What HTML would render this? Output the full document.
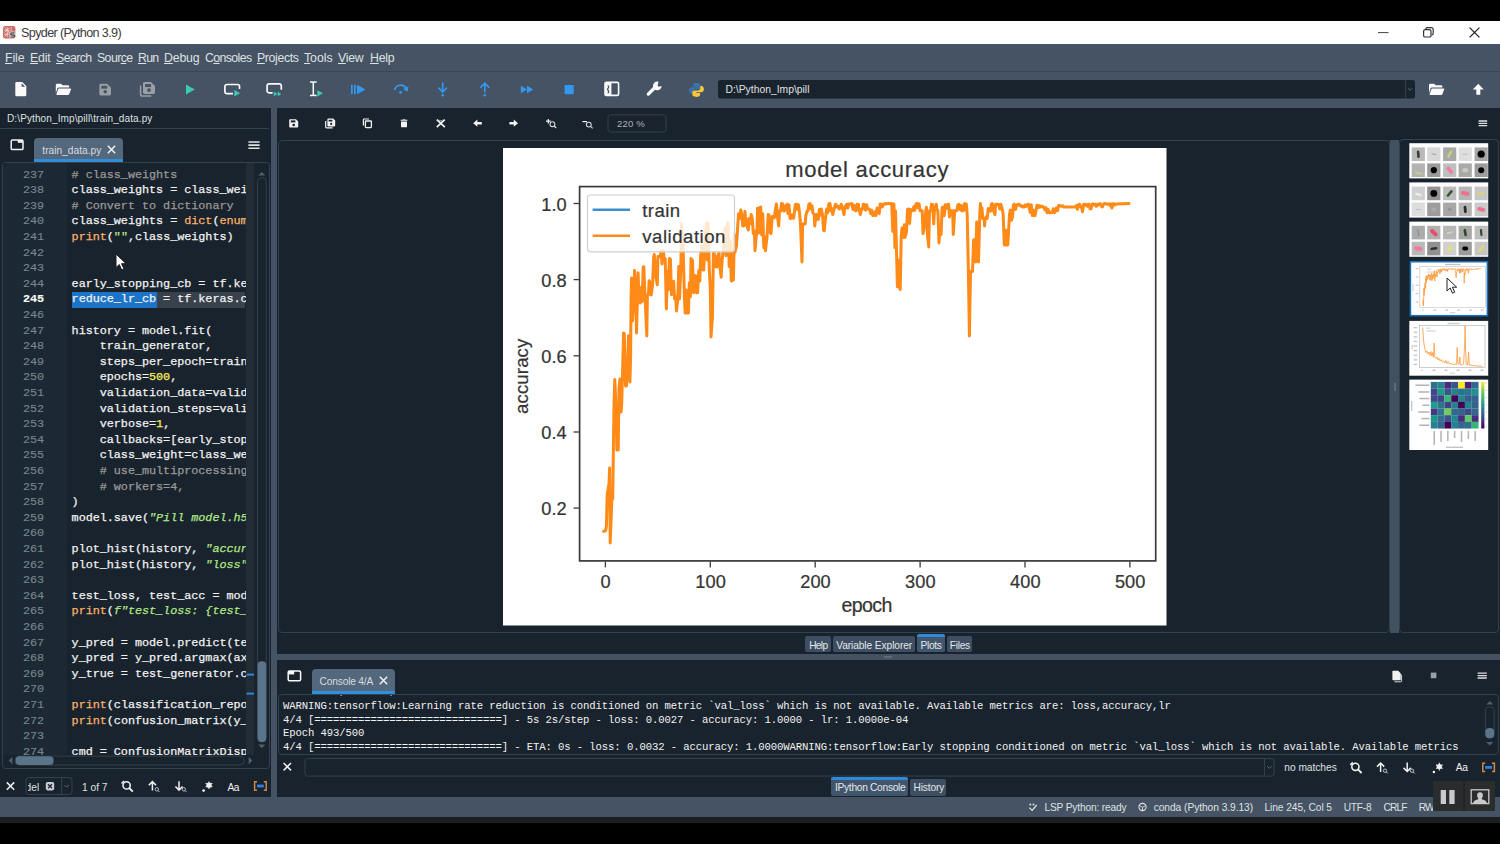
<!DOCTYPE html>
<html><head><meta charset="utf-8"><title>Spyder (Python 3.9)</title>
<style>
*{box-sizing:border-box;margin:0;padding:0}
html,body{width:1500px;height:844px;overflow:hidden;background:#000}
body{position:relative;font-family:"Liberation Sans",sans-serif;color:#e0e1e3;font-size:10px}
.abs{position:absolute}
.sans{font-family:"Liberation Sans",sans-serif}
.mono{font-family:"Liberation Mono",monospace}
#titlebar{left:0;top:21px;width:1500px;height:23px;background:#fff}
#menubar{left:0;top:44px;width:1500px;height:27px;background:#455364}
#toolbar{left:0;top:71px;width:1500px;height:37px;background:#455364;border-top:1px solid #3e4b5a}
#main{left:0;top:108px;width:1500px;height:689px;background:#19232d}
#statusbar{left:0;top:797px;width:1500px;height:20px;background:#455364}
#taskbar{left:0;top:817px;width:1500px;height:6px;background:#1c1d1f}
.menu span{position:absolute;top:7px;font-size:12.3px;color:#e0e1e3;white-space:nowrap;letter-spacing:-0.1px}
.menu u{text-decoration-thickness:1px;text-underline-offset:1.5px}
svg{position:absolute;overflow:visible}
.tab{background:#37414f;border-radius:3px 3px 0 0;border-bottom:2px solid #1a72bb}
.btab{position:absolute;height:16px;background:#32414b;color:#dfe1e2;font-size:10.2px;line-height:16px;text-align:center;border-radius:2px;white-space:nowrap}
.btab.sel{background:#37506b;border-top:2px solid #1a72bb;line-height:13px}
.ln,.cd{position:absolute;white-space:pre;font-family:"Liberation Mono",monospace;font-size:11.800px;letter-spacing:-0.040px;line-height:15.600px}
.ln{color:#74868f;-webkit-text-stroke:0.150px currentColor}.cd{color:#f2f2f2;-webkit-text-stroke:0.25px currentColor}
.c{color:#999}.s2{color:#b0e686}.k{color:#fab16c}.n{color:#faed5c}.s{color:#b0e686;font-style:italic}
.st{position:absolute;top:4px;font-size:10.2px;color:#dfe1e2;white-space:nowrap}
</style></head><body>
<!-- g_top -->
<div class="abs" style="left:0;top:21px;width:1500px;height:23px;background:#fff"></div>
<svg style="left:3.200px;top:25.600px" width="12.400" height="12.400" viewBox="0 0 12.400 12.400"><rect width="12.400" height="12.400" rx="2.200" fill="#cc6a65"/><path d="M1 4.200h6M1 8.200h5M4.200 1v10M8.200 1v4M1.500 1.500l5 5M1.500 10.500l4-4M6.500 1.500l-5 5" stroke="#f4d9d6" stroke-width="0.800" fill="none"/><rect x="6.400" y="5.600" width="6" height="6.800" rx="1" fill="#e9d6d4"/><path d="M11.600 6.800H8.700a1 1 0 0 0-1 1v.2a1 1 0 0 0 1 1h1.900a1 1 0 0 1 1 1v.2a1 1 0 0 1-1 1H7.400" stroke="#4d4d4d" stroke-width="1.300" fill="none"/></svg>
<span style="position:absolute;left:21.0px;top:26.1px;font-family:'Liberation Sans',sans-serif;font-size:12.60px;line-height:15.0px;color:#3a3a3a;white-space:pre;letter-spacing:-0.635px;">Spyder (Python 3.9)</span>
<svg style="left:1378px;top:31.5px" width="11" height="2"><rect width="10.5" height="1.1" fill="#555"/></svg>
<svg style="left:1423px;top:27px" width="11" height="11" viewBox="0 0 11 11"><rect x="0.6" y="2.6" width="7.4" height="7.4" rx="1.6" fill="none" stroke="#333" stroke-width="1.2"/><path d="M2.8 2.4V2a1.4 1.4 0 0 1 1.4-1.4h4.2A1.8 1.8 0 0 1 10.2 2.4v4.2A1.4 1.4 0 0 1 8.8 8h-.4" fill="none" stroke="#333" stroke-width="1.2"/></svg>
<svg style="left:1469px;top:27px" width="11" height="11" viewBox="0 0 11 11"><path d="M0.6 0.6l9.8 9.8M10.4 0.6l-9.8 9.8" stroke="#222" stroke-width="1.3"/></svg>
<div class="abs" style="left:0;top:44px;width:1500px;height:27px;background:#455364"></div>
<span style="position:absolute;left:5.0px;top:50.8px;font-family:'Liberation Sans',sans-serif;font-size:12.30px;line-height:15.0px;color:#dfe1e2;white-space:pre;letter-spacing:-0.080px;"><u>F</u>ile</span>
<span style="position:absolute;left:30.0px;top:50.8px;font-family:'Liberation Sans',sans-serif;font-size:12.30px;line-height:15.0px;color:#dfe1e2;white-space:pre;letter-spacing:-0.174px;"><u>E</u>dit</span>
<span style="position:absolute;left:56.0px;top:50.8px;font-family:'Liberation Sans',sans-serif;font-size:12.30px;line-height:15.0px;color:#dfe1e2;white-space:pre;letter-spacing:-0.579px;"><u>S</u>earch</span>
<span style="position:absolute;left:97.0px;top:50.8px;font-family:'Liberation Sans',sans-serif;font-size:12.30px;line-height:15.0px;color:#dfe1e2;white-space:pre;letter-spacing:-0.579px;">Sour<u>c</u>e</span>
<span style="position:absolute;left:138.0px;top:50.8px;font-family:'Liberation Sans',sans-serif;font-size:12.30px;line-height:15.0px;color:#dfe1e2;white-space:pre;letter-spacing:-0.688px;"><u>R</u>un</span>
<span style="position:absolute;left:164.0px;top:50.8px;font-family:'Liberation Sans',sans-serif;font-size:12.30px;line-height:15.0px;color:#dfe1e2;white-space:pre;letter-spacing:-0.149px;"><u>D</u>ebug</span>
<span style="position:absolute;left:205.0px;top:50.8px;font-family:'Liberation Sans',sans-serif;font-size:12.30px;line-height:15.0px;color:#dfe1e2;white-space:pre;letter-spacing:-0.597px;">C<u>o</u>nsoles</span>
<span style="position:absolute;left:257.0px;top:50.8px;font-family:'Liberation Sans',sans-serif;font-size:12.30px;line-height:15.0px;color:#dfe1e2;white-space:pre;letter-spacing:-0.366px;"><u>P</u>rojects</span>
<span style="position:absolute;left:304.0px;top:50.8px;font-family:'Liberation Sans',sans-serif;font-size:12.30px;line-height:15.0px;color:#dfe1e2;white-space:pre;letter-spacing:-0.043px;"><u>T</u>ools</span>
<span style="position:absolute;left:338.0px;top:50.8px;font-family:'Liberation Sans',sans-serif;font-size:12.30px;line-height:15.0px;color:#dfe1e2;white-space:pre;letter-spacing:-0.234px;"><u>V</u>iew</span>
<span style="position:absolute;left:370.0px;top:50.8px;font-family:'Liberation Sans',sans-serif;font-size:12.30px;line-height:15.0px;color:#dfe1e2;white-space:pre;letter-spacing:-0.199px;"><u>H</u>elp</span>
<div class="abs" style="left:0;top:71px;width:1500px;height:37px;background:#455364;border-top:1.500px solid #36475a"></div>
<!-- g_icons -->
<svg style="left:0;top:71px" width="1500" height="37" viewBox="0 71 1500 37">
<path d="M16.6 82h5.6l4.1 4.1v8.9a1.3 1.3 0 0 1-1.3 1.3h-8.4a1.3 1.3 0 0 1-1.3-1.3v-11.7a1.3 1.3 0 0 1 1.3-1.3z" fill="#fafafa"/><path d="M21.6 83.2v3.6h3.6z" fill="#455364"/>
<path d="M55.8 85.1a1.3 1.3 0 0 1 1.3-1.3h3.9l1.5 1.5h5.4a1.3 1.3 0 0 1 1.3 1.3v0.9h-10.6a1.3 1.3 0 0 0-1.2 0.8l-1.6 4.6z" fill="#fafafa"/><path d="M58.9 88.4h11.6a0.6 0.6 0 0 1 .55 .8l-1.9 5.1a1.1 1.1 0 0 1-1 .7h-11.2a0.6 0.6 0 0 1-.55-.8l1.7-5a1.1 1.1 0 0 1 1-.8z" fill="#fafafa"/>
<path d="M100.79 83.80 h6.26 l3.94 3.94 v6.26 a1.39 1.39 0 0 1 -1.39 1.39 h-8.82 a1.39 1.39 0 0 1 -1.39 -1.39 v-8.82 a1.39 1.39 0 0 1 1.39 -1.39 z" fill="#9a9fa5"/><rect x="101.37" y="85.77" width="5.80" height="2.90" fill="#455364"/><circle cx="105.20" cy="91.69" r="1.74" fill="#455364"/>
<path d="M144.44 82.00 h6.48 l4.08 4.08 v6.48 a1.44 1.44 0 0 1 -1.44 1.44 h-9.12 a1.44 1.44 0 0 1 -1.44 -1.44 v-9.12 a1.44 1.44 0 0 1 1.44 -1.44 z" fill="#9a9fa5"/><rect x="145.04" y="84.04" width="6.00" height="3.00" fill="#455364"/><circle cx="149.00" cy="90.16" r="1.80" fill="#455364"/>
<path d="M140.6 85.5v9a1.6 1.6 0 0 0 1.6 1.6h9" fill="none" stroke="#9a9fa5" stroke-width="1.5"/>
<path d="M186 84.6l8.8 4.9l-8.8 4.9z" fill="#3ccab2"/>
<path d="M233 93.6h-6.2a1.9 1.9 0 0 1-1.9-1.9v-5.3a1.9 1.9 0 0 1 1.9-1.9h10.8a1.9 1.9 0 0 1 1.9 1.9v2.6" fill="none" stroke="#fafafa" stroke-width="1.7"/>
<path d="M234.3 90l5.9 3.3l-5.9 3.3z" fill="#3ccab2"/>
<path d="M272.6 92.8h-3.6a1.9 1.9 0 0 1-1.9-1.9v-5.1a1.9 1.9 0 0 1 1.9-1.9h10.4a1.9 1.9 0 0 1 1.9 1.9v4" fill="none" stroke="#fafafa" stroke-width="1.7"/>
<path d="M273.8 91.6l3.6 2.3l-3.6 2.3zM277.7 91.6l3.6 2.3l-3.6 2.3z" fill="#3ccab2"/>
<path d="M310 82h2.4l.9.5l.9-.5h2.4M310 95.4h2.4l.9-.5l.9.5h2.4M313.3 82.5v12.4" fill="none" stroke="#fafafa" stroke-width="1.5"/>
<path d="M317.4 90.2l5.6 3.1l-5.6 3.1z" fill="#3ccab2"/>
<rect x="351" y="84.8" width="1.7" height="9.4" fill="#3399f0"/><rect x="354" y="84.8" width="1.7" height="9.4" fill="#3399f0"/><path d="M357 84.8l8.4 4.7l-8.4 4.7z" fill="#3399f0"/>
<path d="M394.6 90a6.3 6.3 0 0 1 11.6-1.6" fill="none" stroke="#3399f0" stroke-width="1.7"/><path d="M408.4 86.2l-.6 5.2l-4.8-2.2z" fill="#3399f0"/><circle cx="400.6" cy="92.3" r="1.4" fill="#3399f0"/>
<path d="M442.7 82.4v9.6M438.5 87.6l4.2 4.4l4.2-4.4" fill="none" stroke="#3399f0" stroke-width="1.6"/><circle cx="442.7" cy="95.3" r="1.3" fill="#3399f0"/>
<path d="M484.8 92.6v-9M480.4 87.6l4.4-4.4l4.4 4.4" fill="none" stroke="#3399f0" stroke-width="1.6"/><circle cx="484.8" cy="95.3" r="1.3" fill="#3399f0"/>
<path d="M520.8 85.8l6.3 3.75l-6.3 3.75zM527 85.8l6.3 3.75l-6.3 3.75z" fill="#3399f0"/>
<rect x="564.6" y="85" width="9.1" height="9.2" fill="#3399f0"/>
<rect x="605" y="82.4" width="13.6" height="13" rx="1.4" fill="none" stroke="#fafafa" stroke-width="1.6"/>
<rect x="605.2" y="82.6" width="6.2" height="12.6" fill="#fafafa"/>
<path d="M607 85.4h2.2v2.2l-1 1.7l1 1.7v2.2h-2.2a1.5 1.5 0 0 0 .9-1.5a1.5 1.5 0 0 0-.9-1.6v-1.6a1.5 1.5 0 0 0 .9-1.6a1.5 1.5 0 0 0-.9-1.5z" fill="#455364"/>
<path d="M648.300 94.100l7.600-7.600" stroke="#fafafa" stroke-width="3.300" stroke-linecap="round"/>
<circle cx="657.300" cy="85.900" r="4.300" fill="#fafafa"/>
<path d="M657.600 85.600l1.200-5.200l5 0l0 5l-5 1.400z" fill="#455364"/>
<path d="M696.2 82.7c-3 0-3.4 1.3-3.4 2.3v1.7h3.6v.6h-5c-1.5 0-2.4 1.3-2.4 3.2s.9 3.2 2.3 3.2h1.3v-2c0-1.5 1.2-2.5 2.5-2.5h3.5c1.2 0 2-.9 2-2.1v-2.1c0-1.300-1.400-2.300-4.400-2.300z" fill="#3775a9"/>
<path d="M696.700 96.900c3 0 3.400-1.300 3.400-2.300v-1.700h-3.600v-.6h5c1.500 0 2.400-1.300 2.400-3.200s-.9-3.200-2.300-3.200h-1.300v2c0 1.500-1.200 2.500-2.500 2.500h-3.500c-1.200 0-2 .9-2 2.100v2.100c0 1.300 1.400 2.300 4.400 2.300z" fill="#f8c63d"/>
<rect x="718" y="80" width="697" height="18.400" rx="2.500" fill="#19232d"/>
<path d="M1405.500 80.500v17.400" stroke="#32414b" stroke-width="1"/>
<path d="M1408 88.300l2 2l2-2" fill="none" stroke="#5f6b78" stroke-width="1"/>
<g transform="translate(1373.200 0)"><path d="M55.800 85.100a1.300 1.300 0 0 1 1.300-1.300h3.900l1.500 1.500h5.400a1.300 1.300 0 0 1 1.300 1.300v0.900h-10.600a1.300 1.300 0 0 0-1.200 0.800l-1.600 4.600z" fill="#fafafa"/><path d="M58.900 88.400h11.600a0.600 0.600 0 0 1 .55 .8l-1.900 5.100a1.100 1.100 0 0 1-1 .7h-11.200a0.600 0.600 0 0 1-.55-.8l1.700-5a1.100 1.100 0 0 1 1-.8z" fill="#fafafa"/></g>
<path d="M1478.300 83.800l5.500 5.700h-3.500v5.200h-4v-5.200h-3.500z" fill="#fafafa"/>
</svg>
<span style="position:absolute;left:725.5px;top:82.5px;font-family:'Liberation Sans',sans-serif;font-size:10.30px;line-height:13.0px;color:#e0e1e3;white-space:pre;letter-spacing:0.023px;">D:\Python_Imp\pill</span>
<!-- g_editor -->
<div class="abs" style="left:0;top:108px;width:1500px;height:689px;background:#19232d"></div>
<div class="abs" style="left:271px;top:108px;width:6px;height:689px;background:#455364"></div>
<span style="position:absolute;left:7.0px;top:112.0px;font-family:'Liberation Sans',sans-serif;font-size:10.00px;line-height:13.0px;color:#dfe1e2;white-space:pre;letter-spacing:0.117px;">D:\Python_Imp\pill\train_data.py</span>
<div class="abs" style="left:0;top:127.5px;width:269px;height:1px;background:#32414b"></div>
<svg style="left:0;top:108px" width="271" height="60" viewBox="0 108 271 60">
<rect x="11.200" y="140" width="11.800" height="9.600" rx="1.200" fill="none" stroke="#f2f2f2" stroke-width="1.500"/><rect x="17.800" y="140" width="5.200" height="2.800" fill="#f2f2f2"/>
<path d="M248.4 142h11.2M248.4 145.1h11.2M248.4 148.2h11.2" stroke="#e0e1e3" stroke-width="1.6"/>
</svg>
<div class="abs" style="left:34.400px;top:138.400px;width:88.400px;height:24px;background:#53687c;border-radius:4px 4px 0 0;border-bottom:3.400px solid #2f8fdc"></div>
<span style="position:absolute;left:42.3px;top:144.0px;font-family:'Liberation Sans',sans-serif;font-size:10.20px;line-height:13.0px;color:#d6dbe0;white-space:pre;letter-spacing:0.002px;">train_data.py</span>
<svg style="left:106.5px;top:144.6px" width="9" height="9" viewBox="0 0 9 9"><path d="M0.8 0.8l7.4 7.4M8.2 0.8l-7.4 7.4" stroke="#f0f0f0" stroke-width="1.5"/></svg>
<div class="abs" style="left:2px;top:162.3px;width:267.5px;height:606.5px;border:1px solid #32414b;border-radius:4px"></div>
<div class="abs" style="left:3px;top:163.3px;width:64.3px;height:592px;background:#1c2833;border-radius:3px 0 0 0"></div>
<div class="abs" style="left:71.600px;top:292.2px;width:173.900px;height:15.6px;background:#39424c"></div>
<div class="abs" style="left:71.6px;top:292.2px;width:85.7px;height:15.6px;background:#1d74c6"></div>
<div class="abs" style="left:245.6px;top:163.3px;width:8.6px;height:592px;background:#212c37"></div>
<div class="abs" style="left:0;top:163.3px;width:245.6px;height:591.5px;overflow:hidden">
<span class="ln" style="left:23.0px;top:4.30px;">237</span>
<span class="cd" style="left:71.6px;top:4.30px;letter-spacing:-0.040px"><span class="c"># class_weights</span></span>
<span class="ln" style="left:23.0px;top:19.90px;">238</span>
<span class="cd" style="left:71.6px;top:19.90px;letter-spacing:-0.040px">class_weights = class_weig</span>
<span class="ln" style="left:23.0px;top:35.50px;">239</span>
<span class="cd" style="left:71.6px;top:35.50px;letter-spacing:-0.040px"><span class="c"># Convert to dictionary</span></span>
<span class="ln" style="left:23.0px;top:51.10px;">240</span>
<span class="cd" style="left:71.6px;top:51.10px;letter-spacing:-0.040px">class_weights = <span class="k">dict</span>(<span class="k">enume</span></span>
<span class="ln" style="left:23.0px;top:66.70px;">241</span>
<span class="cd" style="left:71.6px;top:66.70px;letter-spacing:-0.040px"><span class="k">print</span>(<span class="s2">&quot;&quot;</span>,class_weights)</span>
<span class="ln" style="left:23.0px;top:82.30px;">242</span>
<span class="ln" style="left:23.0px;top:97.90px;">243</span>
<span class="ln" style="left:23.0px;top:113.50px;">244</span>
<span class="cd" style="left:71.6px;top:113.50px;letter-spacing:-0.040px">early_stopping_cb = tf.ker</span>
<span class="ln" style="left:23.0px;top:129.10px; font-weight:bold;color:#fafafa;">245</span>
<span class="cd" style="left:71.6px;top:129.10px;letter-spacing:-0.040px">reduce_lr_cb = tf.keras.ca</span>
<span class="ln" style="left:23.0px;top:144.70px;">246</span>
<span class="ln" style="left:23.0px;top:160.30px;">247</span>
<span class="cd" style="left:71.6px;top:160.30px;letter-spacing:-0.040px">history = model.fit(</span>
<span class="ln" style="left:23.0px;top:175.90px;">248</span>
<span class="cd" style="left:71.6px;top:175.90px;letter-spacing:-0.040px">    train_generator,</span>
<span class="ln" style="left:23.0px;top:191.50px;">249</span>
<span class="cd" style="left:71.6px;top:191.50px;letter-spacing:-0.040px">    steps_per_epoch=train_</span>
<span class="ln" style="left:23.0px;top:207.10px;">250</span>
<span class="cd" style="left:71.6px;top:207.10px;letter-spacing:-0.040px">    epochs=<span class="n">500</span>,</span>
<span class="ln" style="left:23.0px;top:222.70px;">251</span>
<span class="cd" style="left:71.6px;top:222.70px;letter-spacing:-0.040px">    validation_data=valida</span>
<span class="ln" style="left:23.0px;top:238.30px;">252</span>
<span class="cd" style="left:71.6px;top:238.30px;letter-spacing:-0.040px">    validation_steps=valid</span>
<span class="ln" style="left:23.0px;top:253.90px;">253</span>
<span class="cd" style="left:71.6px;top:253.90px;letter-spacing:-0.040px">    verbose=<span class="n">1</span>,</span>
<span class="ln" style="left:23.0px;top:269.50px;">254</span>
<span class="cd" style="left:71.6px;top:269.50px;letter-spacing:-0.040px">    callbacks=[early_stopp</span>
<span class="ln" style="left:23.0px;top:285.10px;">255</span>
<span class="cd" style="left:71.6px;top:285.10px;letter-spacing:-0.040px">    class_weight=class_wei</span>
<span class="ln" style="left:23.0px;top:300.70px;">256</span>
<span class="cd" style="left:71.6px;top:300.70px;letter-spacing:-0.040px"><span class="c">    # use_multiprocessing=</span></span>
<span class="ln" style="left:23.0px;top:316.30px;">257</span>
<span class="cd" style="left:71.6px;top:316.30px;letter-spacing:-0.040px"><span class="c">    # workers=4,</span></span>
<span class="ln" style="left:23.0px;top:331.90px;">258</span>
<span class="cd" style="left:71.6px;top:331.90px;letter-spacing:-0.040px">)</span>
<span class="ln" style="left:23.0px;top:347.50px;">259</span>
<span class="cd" style="left:71.6px;top:347.50px;letter-spacing:-0.040px">model.save(<span class="s">&quot;Pill model.h5&quot;</span></span>
<span class="ln" style="left:23.0px;top:363.10px;">260</span>
<span class="ln" style="left:23.0px;top:378.70px;">261</span>
<span class="cd" style="left:71.6px;top:378.70px;letter-spacing:-0.040px">plot_hist(history, <span class="s">&quot;accura</span></span>
<span class="ln" style="left:23.0px;top:394.30px;">262</span>
<span class="cd" style="left:71.6px;top:394.30px;letter-spacing:-0.040px">plot_hist(history, <span class="s">&quot;loss&quot;</span>)</span>
<span class="ln" style="left:23.0px;top:409.90px;">263</span>
<span class="ln" style="left:23.0px;top:425.50px;">264</span>
<span class="cd" style="left:71.6px;top:425.50px;letter-spacing:-0.040px">test_loss, test_acc = mode</span>
<span class="ln" style="left:23.0px;top:441.10px;">265</span>
<span class="cd" style="left:71.6px;top:441.10px;letter-spacing:-0.040px"><span class="k">print</span>(<span class="s">f&quot;test_loss: {test_l</span></span>
<span class="ln" style="left:23.0px;top:456.70px;">266</span>
<span class="ln" style="left:23.0px;top:472.30px;">267</span>
<span class="cd" style="left:71.6px;top:472.30px;letter-spacing:-0.040px">y_pred = model.predict(tes</span>
<span class="ln" style="left:23.0px;top:487.90px;">268</span>
<span class="cd" style="left:71.6px;top:487.90px;letter-spacing:-0.040px">y_pred = y_pred.argmax(axi</span>
<span class="ln" style="left:23.0px;top:503.50px;">269</span>
<span class="cd" style="left:71.6px;top:503.50px;letter-spacing:-0.040px">y_true = test_generator.cl</span>
<span class="ln" style="left:23.0px;top:519.10px;">270</span>
<span class="ln" style="left:23.0px;top:534.70px;">271</span>
<span class="cd" style="left:71.6px;top:534.70px;letter-spacing:-0.040px"><span class="k">print</span>(classification_repor</span>
<span class="ln" style="left:23.0px;top:550.30px;">272</span>
<span class="cd" style="left:71.6px;top:550.30px;letter-spacing:-0.040px"><span class="k">print</span>(confusion_matrix(y_t</span>
<span class="ln" style="left:23.0px;top:565.90px;">273</span>
<span class="ln" style="left:23.0px;top:581.50px;">274</span>
<span class="cd" style="left:71.6px;top:581.50px;letter-spacing:-0.040px">cmd = ConfusionMatrixDispl</span>
</div>
<svg style="left:254px;top:163px" width="16" height="594" viewBox="254 163 16 594">
<path d="M258.2 175.6l3.6-3.6l3.6 3.6z" fill="#4d5f70"/>
<path d="M258.2 744.6l3.6 3.6l3.6-3.6z" fill="#4d5f70"/>
<rect x="257.6" y="177.6" width="8.6" height="564.6" rx="4" fill="#19232d" stroke="#32414b" stroke-width="1"/>
<rect x="257.600" y="661.300" width="8.600" height="80.700" rx="4" fill="#5a7489"/>
<rect x="246.6" y="673.6" width="7.4" height="2" fill="#2e8ad6"/><rect x="246.6" y="692.6" width="7.4" height="2" fill="#2e8ad6"/>
</svg>
<svg style="left:0;top:753px" width="271" height="16" viewBox="0 753 271 16">
<path d="M12.4 756.8l-3.8 3.800l3.800 3.800z" fill="#4d5f70"/><path d="M248.600 756.800l3.800 3.800l-3.800 3.800z" fill="#4d5f70"/>
<rect x="15" y="756.200" width="229" height="8.800" rx="4" fill="#19232d" stroke="#32414b" stroke-width="1"/>
<rect x="15.600" y="756.200" width="38" height="8.800" rx="4" fill="#5a7489"/>
</svg>
<svg style="left:0;top:770px" width="271" height="27" viewBox="0 770 271 27">
<path d="M6.800 782.400l7.400 7.400M14.200 782.400l-7.400 7.400" stroke="#f0f0f0" stroke-width="1.500"/>
<rect x="26" y="777.500" width="46" height="17" rx="2.500" fill="#19232d" stroke="#32414b" stroke-width="1"/>
<path d="M61.500 778v16" stroke="#32414b" stroke-width="1"/><path d="M64.500 785l2.200 2.200l2.200-2.200" fill="none" stroke="#5f6b78" stroke-width="1"/>
<rect x="45.800" y="782" width="8.400" height="8.400" rx="1.800" fill="#c9ccd0"/><path d="M48 784.200l4 4M52 784.200l-4 4" stroke="#19232d" stroke-width="1.300"/>
<circle cx="126.600" cy="785.400" r="3.600" fill="none" stroke="#f0f0f0" stroke-width="1.600"/><path d="M129.200 788l3.600 3.600" stroke="#f0f0f0" stroke-width="1.800"/><path d="M121.500 783.500l2.500-2.500" stroke="#f0f0f0" stroke-width="1.500"/>
<path d="M152.400 790.500v-8.800M148.800 785.200l3.600-3.600l3.600 3.600" fill="none" stroke="#f0f0f0" stroke-width="1.500"/><circle cx="156.800" cy="789.300" r="1.700" fill="none" stroke="#c8ccd0" stroke-width="0.900"/><path d="M158 790.500l1.600 1.600" stroke="#c8ccd0" stroke-width="0.900"/>
<path d="M179 781.200v8.800M175.400 786.500l3.600 3.600l3.600-3.600" fill="none" stroke="#f0f0f0" stroke-width="1.500"/><circle cx="183.800" cy="789.300" r="1.700" fill="none" stroke="#c8ccd0" stroke-width="0.900"/><path d="M185 790.500l1.600 1.600" stroke="#c8ccd0" stroke-width="0.900"/>
<circle cx="203.600" cy="790.600" r="1.300" fill="#f0f0f0"/><circle cx="209" cy="785.200" r="2.600" fill="#f0f0f0"/><path d="M209 781.400v7.600M205.700 783.300l6.600 3.800M205.700 787.100l6.600-3.800" stroke="#f0f0f0" stroke-width="1.100"/>
<path d="M257 781.800h-2.400v8.400h2.400M263.800 781.800h2.400v8.400h-2.400" fill="none" stroke="#c98a4b" stroke-width="1.500"/><rect x="257" y="784.600" width="6.800" height="2.800" fill="#2f7fe6"/>
</svg>
<span style="position:absolute;left:25.6px;top:780.5px;font-family:'Liberation Sans',sans-serif;font-size:10.20px;line-height:13.0px;color:#dfe1e2;white-space:pre;clip-path:inset(0 0 0 2.4px);">del</span>
<span style="position:absolute;left:82.0px;top:780.5px;font-family:'Liberation Sans',sans-serif;font-size:10.20px;line-height:13.0px;color:#dfe1e2;white-space:pre;letter-spacing:-0.003px;">1 of 7</span>
<span style="position:absolute;left:227.5px;top:780.5px;font-family:'Liberation Sans',sans-serif;font-size:10.20px;line-height:13.0px;color:#f0f0f0;white-space:pre;letter-spacing:-0.488px;">Aa</span>
<svg style="left:114.5px;top:252.5px" width="14" height="19" viewBox="0 0 14 19"><path d="M1 1v13.6l3.300-3.100 2.400 5.500 2.300-1-2.400-5.300h4.500z" fill="#fff" stroke="#1a1a1a" stroke-width="1" stroke-linejoin="round"/></svg>
<!-- g_plot -->
<svg style="left:277px;top:108px" width="1223" height="32" viewBox="277 108 1223 32">
<path d="M290 119.200h6l2.200 2.200v5.400a0.800 0.800 0 0 1-.8.800h-7.400a0.800 0.800 0 0 1-.8-.8v-6.800a0.800 0.800 0 0 1 .8-.8z" fill="#f2f2f2"/><rect x="290.800" y="120.400" width="4.600" height="2" fill="#19232d"/><circle cx="293.700" cy="125" r="1.300" fill="#19232d"/>
<path d="M328.200 118.600h5l2 2v5a0.800 0.800 0 0 1-.8.800h-6.200a0.800 0.800 0 0 1-.8-.8v-6.200a0.800 0.800 0 0 1 .8-.8z" fill="#f2f2f2"/><rect x="328.600" y="119.800" width="3.800" height="1.700" fill="#19232d"/><circle cx="331.200" cy="123.900" r="1.100" fill="#19232d"/><path d="M325.700 121v6a0.900 0.900 0 0 0 .9.900h6" fill="none" stroke="#f2f2f2" stroke-width="1.200"/>
<rect x="365.400" y="121" width="6" height="6.600" rx="0.800" fill="none" stroke="#f2f2f2" stroke-width="1.300"/><path d="M363.400 125.400v-5.600a0.800 0.800 0 0 1 .8-.8h4.800" fill="none" stroke="#f2f2f2" stroke-width="1.200"/>
<path d="M401 121.400h6v5a0.900 0.900 0 0 1-.9.900h-4.200a0.900 0.900 0 0 1-.9-.9zM400.600 120.700v-1h2l.6-.5h1.600l.6.500h2v1z" fill="#f2f2f2"/>
<path d="M436.800 119.600l8 7.600M444.800 119.600l-8 7.600" stroke="#f2f2f2" stroke-width="1.700"/><path d="M439.300 119.800l1.500 1.500l1.500-1.500" fill="none" stroke="#f2f2f2" stroke-width="0.800"/>
<path d="M473.200 123.200l4.200-3.600v2.300h4.400v2.600h-4.400v2.300z" fill="#f2f2f2"/>
<path d="M518 123.200l-4.200-3.600v2.300h-4.400v2.600h4.400v2.300z" fill="#f2f2f2"/>
<circle cx="552.400" cy="124.200" r="2.400" fill="none" stroke="#d5d8db" stroke-width="1.100"/><path d="M554.200 126l2 2" stroke="#d5d8db" stroke-width="1.200"/><path d="M546 121.200h4.600M548.300 118.900v4.600" stroke="#f2f2f2" stroke-width="1.200"/>
<circle cx="588.800" cy="124.600" r="2.400" fill="none" stroke="#d5d8db" stroke-width="1.100"/><path d="M590.600 126.400l2 2" stroke="#d5d8db" stroke-width="1.200"/><path d="M582.400 121.600h4.600" stroke="#f2f2f2" stroke-width="1.200"/>
<rect x="608" y="114.800" width="58" height="17.200" rx="2.500" fill="#19232d" stroke="#32414b" stroke-width="1"/>
<path d="M1478.600 121h8.600M1478.600 123.300h8.600M1478.600 125.600h8.600" stroke="#e0e1e3" stroke-width="1.300"/>
</svg>
<span style="position:absolute;left:617.0px;top:117.5px;font-family:'Liberation Sans',sans-serif;font-size:9.60px;line-height:12.0px;color:#aab2ba;white-space:pre;letter-spacing:0.156px;">220 %</span>
<div class="abs" style="left:278px;top:139.700px;width:1112px;height:493.500px;border:1px solid #32414b;border-radius:4px"></div>
<div class="abs" style="left:1390.400px;top:140px;width:8.200px;height:493px;background:#425162"></div>
<div class="abs" style="left:1394px;top:383px;width:1.500px;height:8px;background:#5c6b7a"></div>
<div class="abs" style="left:1399.300px;top:139.200px;width:99.500px;height:494px;border:1px solid #32414b;border-radius:4px"></div>
<svg style="left:503px;top:148px" width="664" height="478" viewBox="503 148 664 478">
<rect x="503" y="148" width="663.500" height="477.500" fill="#fff"/>
<polyline points="603.6,531.4 605.6,530.6 606.4,526.4 607.2,494.0 609.0,484.0 609.6,468.1 610.2,543.0 611.9,499.0 612.7,499.0 614.0,404.0 614.8,379.5 616.2,412.0 616.9,450.0 618.2,450.0 619.0,388.1 620.0,379.0 621.1,412.0 621.7,404.0 623.6,333.0 624.3,333.9 625.5,386.0 626.4,386.0 627.6,368.0 628.5,335.7 629.9,382.0 630.6,355.9 631.1,295.0 631.6,278.1 632.5,321.0 633.7,302.9 634.5,270.6 635.8,289.7 636.5,333.0 638.1,272.7 639.0,299.8 640.2,303.0 641.1,287.4 642.1,301.6 643.2,267.1 643.8,266.6 645.3,303.0 646.8,336.0 647.4,295.0 648.4,295.0 649.2,280.7 650.5,282.8 651.2,295.0 652.6,284.8 653.7,257.1 654.3,254.5 655.8,276.3 657.3,284.8 657.9,256.5 658.9,256.5 660.3,256.5 661.0,251.0 662.0,263.9 663.3,250.5 664.1,258.5 665.2,258.5 666.4,309.0 667.3,271.6 668.3,289.9 669.4,258.5 670.4,259.0 671.5,294.7 672.8,290.8 673.6,281.2 674.6,299.0 675.7,296.5 676.5,311.0 677.8,299.0 678.8,266.4 679.5,299.0 680.9,266.3 681.5,224.0 683.0,243.4 684.5,299.0 685.1,313.0 686.2,290.0 687.2,313.0 688.5,313.0 689.3,282.8 690.4,296.8 691.0,258.5 692.5,260.5 693.5,292.8 694.6,288.8 695.6,275.4 696.7,292.8 697.6,292.8 698.8,270.6 699.8,281.1 700.6,256.0 701.9,246.3 703.0,270.0 703.8,270.0 705.1,234.6 706.6,223.0 707.2,260.0 708.2,223.5 709.3,270.0 710.3,288.9 711.0,337.0 712.4,317.3 713.4,253.0 714.2,252.5 715.5,266.5 717.0,267.0 717.6,256.2 719.0,252.5 719.7,265.1 721.2,277.2 721.8,264.4 722.9,252.5 723.7,247.0 725.0,228.3 726.0,255.8 727.5,223.0 728.1,223.5 729.2,266.4 730.2,241.3 731.3,281.0 731.8,281.0 732.3,252.3 733.4,279.9 734.4,234.7 735.0,252.5 736.5,245.7 738.0,221.3 738.6,213.8 739.7,218.5 740.8,210.0 741.8,215.2 742.7,226.0 743.9,226.0 744.9,211.5 745.5,216.5 747.0,226.0 748.3,230.0 749.1,218.6 750.2,223.9 751.2,214.6 752.3,218.9 753.3,233.6 754.4,230.8 755.0,250.7 756.5,233.6 757.0,233.6 757.5,208.3 758.6,233.1 759.6,207.5 760.7,207.0 761.7,234.9 762.8,213.7 763.8,247.7 764.8,236.9 765.4,250.7 766.9,238.1 768.2,214.6 769.0,215.1 770.1,232.3 771.0,233.6 772.2,216.5 773.0,216.5 774.3,217.7 775.8,207.0 776.4,204.0 777.4,216.5 778.7,226.0 779.5,211.0 780.6,211.0 781.5,203.5 782.7,204.0 783.7,211.0 784.4,211.0 785.8,205.8 787.2,204.2 787.9,213.6 789.0,205.0 790.0,218.4 791.0,218.4 792.1,214.9 793.2,218.4 793.8,217.5 795.3,204.7 796.7,204.2 797.4,209.4 798.4,204.7 799.5,212.7 800.5,224.0 802.0,262.0 802.6,224.0 803.7,224.0 805.2,224.0 805.8,215.9 807.1,211.0 807.9,210.8 808.9,204.0 810.0,203.5 811.0,209.1 812.1,205.8 812.8,212.7 814.2,214.6 814.7,226.0 816.2,214.6 817.5,214.6 818.3,219.6 819.4,209.5 820.4,215.3 821.3,209.0 822.5,214.6 823.6,230.5 824.2,230.8 826.1,212.7 826.7,208.9 827.8,212.7 828.8,204.0 830.0,203.5 830.9,210.8 832.0,208.7 832.7,214.6 834.1,209.0 835.5,204.2 836.2,204.7 837.2,207.2 838.3,206.4 839.3,209.0 840.4,207.8 841.2,204.2 842.5,208.0 844.0,214.6 844.6,209.0 845.6,205.7 846.9,204.2 847.7,208.1 848.8,204.0 849.8,204.0 850.9,204.0 851.7,203.5 853.0,209.5 854.0,205.1 855.5,210.8 856.1,210.8 857.2,204.2 858.3,204.2 859.3,210.4 860.4,214.6 861.4,209.2 862.4,209.3 863.3,204.2 864.5,204.7 865.6,210.3 866.6,204.7 867.6,208.7 869.0,209.0 869.7,209.5 870.8,213.7 871.8,210.3 872.9,215.6 873.7,215.6 875.0,211.9 876.0,215.5 877.1,208.1 878.4,210.8 879.2,213.7 880.2,204.0 881.3,204.2 882.3,207.0 883.4,204.0 884.4,204.0 885.0,203.5 886.5,204.0 887.6,203.5 888.6,203.5 889.7,203.5 890.7,204.0 891.7,203.5 892.8,231.5 893.9,204.0 894.9,247.6 895.5,210.8 897.4,286.7 898.1,260.0 899.1,286.7 900.2,289.5 901.2,237.2 902.0,228.0 903.3,237.4 904.4,224.8 905.0,237.4 906.5,232.2 907.5,209.5 908.8,209.0 909.6,223.5 910.7,209.5 911.7,210.8 912.6,210.8 913.8,206.7 914.9,210.3 915.9,204.0 917.3,203.5 918.0,207.7 919.1,204.0 920.1,210.8 921.1,210.8 922.2,210.8 923.0,233.6 924.3,227.3 925.8,210.8 926.4,207.3 927.4,233.6 928.7,246.9 929.5,210.8 930.6,210.8 931.5,204.2 932.7,204.7 933.7,223.8 934.4,210.8 936.3,204.2 936.9,209.5 937.9,210.8 939.0,243.0 940.0,226.6 941.1,234.4 942.1,207.5 942.9,207.0 944.2,215.7 945.3,204.7 946.3,208.4 947.4,204.7 948.6,204.2 949.5,216.9 950.5,210.8 951.6,210.8 952.6,210.8 953.3,234.5 954.7,210.8 956.2,210.8 956.8,210.8 957.9,204.8 959.0,204.2 960.0,209.7 961.0,205.5 961.8,210.8 963.1,210.8 964.2,204.0 964.7,203.5 965.2,209.8 966.3,204.0 967.2,214.6 968.4,271.5 969.4,336.0 970.5,271.5 971.3,271.5 972.5,271.5 973.6,239.8 975.1,239.3 975.7,262.0 976.7,222.0 977.8,239.3 978.5,262.0 979.9,210.9 980.4,203.5 980.9,214.2 982.0,207.9 982.7,218.4 984.1,218.4 984.6,226.0 985.1,218.4 986.5,216.5 987.2,218.4 988.3,208.5 989.3,210.8 990.4,211.2 991.4,204.0 992.2,203.5 993.5,210.8 995.0,214.6 995.6,204.2 996.7,204.2 997.9,204.2 998.8,204.7 999.8,209.0 1000.7,204.2 1001.9,207.3 1003.2,214.6 1004.3,245.0 1005.1,245.0 1006.1,230.3 1007.2,245.0 1007.8,245.0 1009.5,214.6 1010.3,210.1 1011.4,220.3 1012.4,217.4 1013.5,204.9 1014.2,204.2 1015.6,209.4 1016.6,204.7 1017.7,205.4 1019.0,204.2 1019.8,204.7 1020.8,206.2 1021.9,205.8 1022.7,207.0 1024.0,207.0 1025.0,205.0 1026.0,206.4 1027.1,204.7 1028.4,204.2 1030.2,212.4 1031.3,204.7 1032.3,215.5 1033.4,210.1 1034.4,215.6 1035.0,215.6 1037.0,205.2 1037.6,205.7 1038.6,207.5 1039.7,205.7 1040.7,207.0 1041.8,206.1 1043.6,207.0 1044.9,209.8 1046.0,207.7 1047.0,212.7 1048.1,209.5 1049.3,212.7 1050.2,212.7 1051.2,212.3 1052.3,212.5 1053.3,208.8 1054.4,212.7 1055.0,211.8 1056.5,207.9 1057.5,210.6 1058.8,205.2 1059.6,205.7 1061.7,206.3 1062.8,205.7 1063.8,207.0 1066.4,207.0 1071.2,207.0 1074.3,207.0 1075.8,207.0 1076.4,205.5 1077.4,209.3 1078.5,204.7 1079.6,204.2 1080.6,207.0 1081.6,207.1 1082.5,211.8 1083.7,204.2 1084.4,204.2 1085.8,204.7 1086.9,206.2 1087.9,204.2 1089.1,204.2 1090.0,208.6 1091.0,209.0 1092.1,204.2 1092.9,203.7 1094.2,205.0 1095.3,204.2 1096.3,206.3 1097.4,204.2 1098.4,204.9 1099.5,204.0 1100.5,203.7 1101.6,206.5 1102.4,207.0 1103.7,204.0 1104.3,203.5 1105.8,203.7 1106.8,204.0 1107.9,204.3 1108.9,203.7 1110.0,205.3 1110.9,203.7 1111.8,208.0 1113.1,204.0 1113.7,203.5 1115.2,205.0 1116.3,204.0 1129.0,203.5" fill="none" stroke="#ff8a17" stroke-width="3.0" stroke-linejoin="round" stroke-linecap="round"/>
<rect x="579.600" y="186.600" width="576.100" height="374.300" fill="none" stroke="#3a3a3a" stroke-width="1.7"/>
<path d="M605.4 561.600v5.800" stroke="#3a3a3a" stroke-width="1.300"/>
<path d="M710.3 561.600v5.800" stroke="#3a3a3a" stroke-width="1.300"/>
<path d="M815.2 561.600v5.800" stroke="#3a3a3a" stroke-width="1.300"/>
<path d="M920.1 561.600v5.800" stroke="#3a3a3a" stroke-width="1.300"/>
<path d="M1025.0 561.600v5.800" stroke="#3a3a3a" stroke-width="1.300"/>
<path d="M1129.9 561.600v5.800" stroke="#3a3a3a" stroke-width="1.300"/>
<path d="M573.600 203.5h6" stroke="#3a3a3a" stroke-width="1.300"/>
<path d="M573.600 279.6h6" stroke="#3a3a3a" stroke-width="1.300"/>
<path d="M573.600 355.8h6" stroke="#3a3a3a" stroke-width="1.300"/>
<path d="M573.600 432.0h6" stroke="#3a3a3a" stroke-width="1.300"/>
<path d="M573.600 508.1h6" stroke="#3a3a3a" stroke-width="1.300"/>
<rect x="587.500" y="195" width="147" height="56.800" rx="3" fill="#fff" fill-opacity="0.800" stroke="#d0d0d0" stroke-width="1.200"/>
<path d="M592.600 209.800h37.400" stroke="#3a8fd0" stroke-width="2.500"/><path d="M592.600 235.700h37.400" stroke="#ff8c1a" stroke-width="2.500"/>
</svg>
<span style="position:absolute;left:600.6px;top:571.6px;font-family:'Liberation Sans',sans-serif;font-size:18.20px;line-height:21.8px;color:#343434;white-space:pre;-webkit-text-stroke:0.22px #343434;">0</span>
<span style="position:absolute;left:695.3px;top:571.6px;font-family:'Liberation Sans',sans-serif;font-size:18.20px;line-height:21.8px;color:#343434;white-space:pre;letter-spacing:0.078px;-webkit-text-stroke:0.22px #343434;">100</span>
<span style="position:absolute;left:800.2px;top:571.6px;font-family:'Liberation Sans',sans-serif;font-size:18.20px;line-height:21.8px;color:#343434;white-space:pre;letter-spacing:0.078px;-webkit-text-stroke:0.22px #343434;">200</span>
<span style="position:absolute;left:905.1px;top:571.6px;font-family:'Liberation Sans',sans-serif;font-size:18.20px;line-height:21.8px;color:#343434;white-space:pre;letter-spacing:0.078px;-webkit-text-stroke:0.22px #343434;">300</span>
<span style="position:absolute;left:1010.0px;top:571.6px;font-family:'Liberation Sans',sans-serif;font-size:18.20px;line-height:21.8px;color:#343434;white-space:pre;letter-spacing:0.078px;-webkit-text-stroke:0.22px #343434;">400</span>
<span style="position:absolute;left:1114.9px;top:571.6px;font-family:'Liberation Sans',sans-serif;font-size:18.20px;line-height:21.8px;color:#343434;white-space:pre;letter-spacing:0.078px;-webkit-text-stroke:0.22px #343434;">500</span>
<span style="position:absolute;left:541.3px;top:194.6px;font-family:'Liberation Sans',sans-serif;font-size:18.20px;line-height:21.8px;color:#343434;white-space:pre;letter-spacing:-0.034px;-webkit-text-stroke:0.22px #343434;">1.0</span>
<span style="position:absolute;left:541.3px;top:270.7px;font-family:'Liberation Sans',sans-serif;font-size:18.20px;line-height:21.8px;color:#343434;white-space:pre;letter-spacing:-0.034px;-webkit-text-stroke:0.22px #343434;">0.8</span>
<span style="position:absolute;left:541.3px;top:346.9px;font-family:'Liberation Sans',sans-serif;font-size:18.20px;line-height:21.8px;color:#343434;white-space:pre;letter-spacing:-0.034px;-webkit-text-stroke:0.22px #343434;">0.6</span>
<span style="position:absolute;left:541.3px;top:423.0px;font-family:'Liberation Sans',sans-serif;font-size:18.20px;line-height:21.8px;color:#343434;white-space:pre;letter-spacing:-0.034px;-webkit-text-stroke:0.22px #343434;">0.4</span>
<span style="position:absolute;left:541.3px;top:499.2px;font-family:'Liberation Sans',sans-serif;font-size:18.20px;line-height:21.8px;color:#343434;white-space:pre;letter-spacing:-0.034px;-webkit-text-stroke:0.22px #343434;">0.2</span>
<span style="position:absolute;left:785.2px;top:156.8px;font-family:'Liberation Sans',sans-serif;font-size:22.00px;line-height:26.4px;color:#343434;white-space:pre;letter-spacing:0.710px;-webkit-text-stroke:0.22px #343434;">model accuracy</span>
<span style="position:absolute;left:841.4px;top:593.7px;font-family:'Liberation Sans',sans-serif;font-size:19.60px;line-height:23.5px;color:#343434;white-space:pre;letter-spacing:-0.601px;-webkit-text-stroke:0.22px #343434;">epoch</span>
<div class="abs" style="left:510.5px;top:338.5px;width:22px;height:75px"><span style="position:absolute;left:0;top:75px;transform-origin:0 0;transform:rotate(-90deg);font-size:18.6px;line-height:22px;color:#343434;white-space:pre;letter-spacing:0.134px;-webkit-text-stroke:0.22px #343434;">accuracy</span></div>
<span style="position:absolute;left:642.3px;top:199.6px;font-family:'Liberation Sans',sans-serif;font-size:18.60px;line-height:22.3px;color:#343434;white-space:pre;letter-spacing:0.403px;-webkit-text-stroke:0.22px #343434;">train</span>
<span style="position:absolute;left:642.3px;top:225.6px;font-family:'Liberation Sans',sans-serif;font-size:18.60px;line-height:22.3px;color:#343434;white-space:pre;letter-spacing:0.501px;-webkit-text-stroke:0.22px #343434;">validation</span>
<!-- g_thumbs -->
<svg style="left:1400px;top:140px" width="99" height="320" viewBox="1400 140 99 320">
<defs><filter id="b1" x="-5%" y="-5%" width="110%" height="110%"><feGaussianBlur stdDeviation="0.55"/></filter></defs>
<g filter="url(#b1)">
<rect x="1409.3" y="143.2" width="78.9" height="35.2" fill="#fdfdfd"/><rect x="1411.7" y="147.4" width="13.2" height="13.6" fill="#b9b9b9"/><rect x="1414.55" y="152.90" width="7.50" height="2.60" rx="1.30" fill="#3a3a33" opacity="1.00" transform="rotate(85 1418.30 154.20)"/><rect x="1427.2" y="147.4" width="13.2" height="13.6" fill="#d8d8d8"/><rect x="1431.30" y="153.75" width="5.00" height="0.90" rx="0.45" fill="#9a9a9a" opacity="1.00" transform="rotate(15 1433.80 154.20)"/><rect x="1443.1" y="147.4" width="13.2" height="13.6" fill="#a8a8a8"/><rect x="1445.70" y="152.90" width="8.00" height="2.60" rx="1.30" fill="#cfcf7a" opacity="1.00" transform="rotate(-60 1449.70 154.20)"/><rect x="1458.6" y="147.4" width="13.2" height="13.6" fill="#dedede"/><rect x="1462.45" y="153.70" width="5.50" height="1.00" rx="0.50" fill="#c2c2a8" opacity="1.00" transform="rotate(-8 1465.20 154.20)"/><rect x="1474.6" y="147.4" width="13.2" height="13.6" fill="#a6a6a6"/><circle cx="1481.20" cy="154.20" r="3.60" fill="#050505" opacity="1.00"/><rect x="1411.7" y="163.4" width="13.2" height="13.6" fill="#b3b3b3"/><rect x="1414.80" y="172.10" width="7.00" height="2.20" rx="1.10" fill="#c9cb86" opacity="1.00" transform="rotate(12 1418.30 173.20)"/><rect x="1427.2" y="163.4" width="13.2" height="13.6" fill="#9b9b9b"/><circle cx="1433.80" cy="170.20" r="3.10" fill="#050505" opacity="1.00"/><rect x="1443.1" y="163.4" width="13.2" height="13.6" fill="#bfbfbf"/><rect x="1445.45" y="168.40" width="8.50" height="3.60" rx="1.80" fill="#f0809a" opacity="1.00" transform="rotate(50 1449.70 170.20)"/><rect x="1458.6" y="163.4" width="13.2" height="13.6" fill="#a9a9a9"/><rect x="1462.20" y="167.95" width="6.00" height="4.50" rx="2.25" fill="#c9cabb" opacity="1.00" transform="rotate(0 1465.20 170.20)"/><rect x="1474.6" y="163.4" width="13.2" height="13.6" fill="#9c9c9c"/><circle cx="1481.20" cy="170.20" r="3.00" fill="#050505" opacity="1.00"/>
<rect x="1409.3" y="182.4" width="78.9" height="35.2" fill="#fdfdfd"/><rect x="1411.7" y="186.6" width="13.2" height="13.6" fill="#d0d0d0"/><rect x="1415.05" y="193.20" width="6.50" height="2.40" rx="1.20" fill="#efefe2" opacity="1.00" transform="rotate(15 1418.30 194.40)"/><rect x="1427.2" y="186.6" width="13.2" height="13.6" fill="#929292"/><circle cx="1433.80" cy="193.40" r="3.40" fill="#050505" opacity="1.00"/><rect x="1443.1" y="186.6" width="13.2" height="13.6" fill="#bcbcbc"/><rect x="1445.70" y="192.10" width="8.00" height="2.60" rx="1.30" fill="#2f5a2a" opacity="1.00" transform="rotate(-50 1449.70 193.40)"/><rect x="1458.6" y="186.6" width="13.2" height="13.6" fill="#b6b6b6"/><rect x="1460.95" y="191.40" width="8.50" height="4.00" rx="2.00" fill="#f0708c" opacity="1.00" transform="rotate(8 1465.20 193.40)"/><rect x="1474.6" y="186.6" width="13.2" height="13.6" fill="#c7c7c7"/><rect x="1477.20" y="192.30" width="8.00" height="2.20" rx="1.10" fill="#d9d870" opacity="1.00" transform="rotate(-3 1481.20 193.40)"/><rect x="1411.7" y="202.6" width="13.2" height="13.6" fill="#dddddd"/><rect x="1415.55" y="208.95" width="5.50" height="0.90" rx="0.45" fill="#b5b5a5" opacity="1.00" transform="rotate(0 1418.30 209.40)"/><rect x="1427.2" y="202.6" width="13.2" height="13.6" fill="#9d9d9d"/><rect x="1431.05" y="207.40" width="5.50" height="4.00" rx="2.00" fill="#a9a9a9" opacity="1.00" transform="rotate(0 1433.80 209.40)"/><rect x="1443.1" y="202.6" width="13.2" height="13.6" fill="#a7a7a7"/><rect x="1447.70" y="208.40" width="4.00" height="2.00" rx="1.00" fill="#8f8f8f" opacity="1.00" transform="rotate(-10 1449.70 209.40)"/><rect x="1458.6" y="202.6" width="13.2" height="13.6" fill="#b5b5b5"/><rect x="1461.45" y="208.00" width="7.50" height="2.80" rx="1.40" fill="#2c2f28" opacity="1.00" transform="rotate(85 1465.20 209.40)"/><rect x="1474.6" y="202.6" width="13.2" height="13.6" fill="#cacaca"/><rect x="1477.20" y="207.50" width="8.00" height="3.80" rx="1.90" fill="#f0708c" opacity="1.00" transform="rotate(12 1481.20 209.40)"/>
<rect x="1409.3" y="221.6" width="78.9" height="35.2" fill="#fdfdfd"/><rect x="1411.7" y="225.8" width="13.2" height="13.6" fill="#ababab"/><rect x="1414.80" y="232.00" width="7.00" height="1.20" rx="0.60" fill="#8a8a8a" opacity="1.00" transform="rotate(80 1418.30 232.60)"/><rect x="1427.2" y="225.8" width="13.2" height="13.6" fill="#b1b1b1"/><rect x="1429.30" y="230.60" width="9.00" height="4.00" rx="2.00" fill="#e8506e" opacity="1.00" transform="rotate(45 1433.80 232.60)"/><rect x="1443.1" y="225.8" width="13.2" height="13.6" fill="#b6b6b6"/><rect x="1446.45" y="231.80" width="6.50" height="1.60" rx="0.80" fill="#d5d5b5" opacity="1.00" transform="rotate(-15 1449.70 232.60)"/><rect x="1458.6" y="225.8" width="13.2" height="13.6" fill="#a6a6a6"/><rect x="1461.45" y="231.30" width="7.50" height="2.60" rx="1.30" fill="#2f4a25" opacity="1.00" transform="rotate(80 1465.20 232.60)"/><rect x="1474.6" y="225.8" width="13.2" height="13.6" fill="#bebebe"/><rect x="1477.70" y="231.50" width="7.00" height="2.20" rx="1.10" fill="#3a4a30" opacity="1.00" transform="rotate(85 1481.20 232.60)"/><rect x="1411.7" y="241.8" width="13.2" height="13.6" fill="#bababa"/><rect x="1414.05" y="246.60" width="8.50" height="4.00" rx="2.00" fill="#f47a98" opacity="1.00" transform="rotate(10 1418.30 248.60)"/><rect x="1427.2" y="241.8" width="13.2" height="13.6" fill="#909090"/><rect x="1430.30" y="247.40" width="7.00" height="2.40" rx="1.20" fill="#25301f" opacity="1.00" transform="rotate(-8 1433.80 248.60)"/><rect x="1443.1" y="241.8" width="13.2" height="13.6" fill="#d0d0d0"/><rect x="1445.70" y="247.20" width="8.00" height="2.80" rx="1.40" fill="#e3e070" opacity="1.00" transform="rotate(-60 1449.70 248.60)"/><rect x="1458.6" y="241.8" width="13.2" height="13.6" fill="#9b9b9b"/><rect x="1462.20" y="246.60" width="6.00" height="4.00" rx="2.00" fill="#050505" opacity="1.00" transform="rotate(0 1465.20 248.60)"/><rect x="1474.6" y="241.8" width="13.2" height="13.6" fill="#c6c6c6"/><rect x="1476.95" y="247.20" width="8.50" height="2.80" rx="1.40" fill="#dcd878" opacity="1.00" transform="rotate(-50 1481.20 248.60)"/>
</g>
<rect x="1409.6" y="260.9" width="78.6" height="55.6" fill="#1b6fb8"/>
<rect x="1411.2" y="262.5" width="75.4" height="52.4" fill="#fff"/>
<g transform="translate(1411.2 262.5) scale(0.11364 0.10974) translate(-503 -148)">
<rect x="579.6" y="186.6" width="576.1" height="374.3" fill="none" stroke="#888" stroke-width="3"/>
<polyline points="603.6,531.4 606.4,526.4 609.0,484.0 610.2,543.0 612.7,499.0 614.8,379.5 616.9,450.0 619.0,388.1 621.1,412.0 623.6,333.0 625.5,386.0 627.6,368.0 629.9,382.0 631.1,295.0 632.5,321.0 634.5,270.6 636.5,333.0 639.0,299.8 641.1,287.4 643.2,267.1 645.3,303.0 647.4,295.0 649.2,280.7 651.2,295.0 653.7,257.1 655.8,276.3 657.9,256.5 660.3,256.5 662.0,263.9 664.1,258.5 666.4,309.0 668.3,289.9 670.4,259.0 672.8,290.8 674.6,299.0 676.5,311.0 678.8,266.4 680.9,266.3 683.0,243.4 685.1,313.0 687.2,313.0 689.3,282.8 691.0,258.5 693.5,292.8 695.6,275.4 697.6,292.8 699.8,281.1 701.9,246.3 703.8,270.0 706.6,223.0 708.2,223.5 710.3,288.9 712.4,317.3 714.2,252.5 717.0,267.0 719.0,252.5 721.2,277.2 722.9,252.5 725.0,228.3 727.5,223.0 729.2,266.4 731.3,281.0 732.3,252.3 734.4,234.7 736.5,245.7 738.6,213.8 740.8,210.0 742.7,226.0 744.9,211.5 747.0,226.0 749.1,218.6 751.2,214.6 753.3,233.6 755.0,250.7 757.0,233.6 758.6,233.1 760.7,207.0 762.8,213.7 764.8,236.9 766.9,238.1 769.0,215.1 771.0,233.6 773.0,216.5 775.8,207.0 777.4,216.5 779.5,211.0 781.5,203.5 783.7,211.0 785.8,205.8 787.9,213.6 790.0,218.4 792.1,214.9 793.8,217.5 796.7,204.2 798.4,204.7 800.5,224.0 802.6,224.0 805.2,224.0 807.1,211.0 808.9,204.0 811.0,209.1 812.8,212.7 814.7,226.0 817.5,214.6 819.4,209.5 821.3,209.0 823.6,230.5 826.1,212.7 827.8,212.7 830.0,203.5 832.0,208.7 834.1,209.0 836.2,204.7 838.3,206.4 840.4,207.8 842.5,208.0 844.6,209.0 846.9,204.2 848.8,204.0 850.9,204.0 853.0,209.5 855.5,210.8 857.2,204.2 859.3,210.4 861.4,209.2 863.3,204.2 865.6,210.3 867.6,208.7 869.7,209.5 871.8,210.3 873.7,215.6 876.0,215.5 878.4,210.8 880.2,204.0 882.3,207.0 884.4,204.0 886.5,204.0 888.6,203.5 890.7,204.0 892.8,231.5 894.9,247.6 897.4,286.7 899.1,286.7 901.2,237.2 903.3,237.4 905.0,237.4 907.5,209.5 909.6,223.5 911.7,210.8 913.8,206.7 915.9,204.0 918.0,207.7 920.1,210.8 922.2,210.8 924.3,227.3 926.4,207.3 928.7,246.9 930.6,210.8 932.7,204.7 934.4,210.8 936.9,209.5 939.0,243.0 941.1,234.4 942.9,207.0 945.3,204.7 947.4,204.7 949.5,216.9 951.6,210.8 953.3,234.5 956.2,210.8 957.9,204.8 960.0,209.7 961.8,210.8 964.2,204.0 965.2,209.8 967.2,214.6 969.4,336.0 971.3,271.5 973.6,239.8 975.7,262.0 977.8,239.3 979.9,210.9 980.9,214.2 982.7,218.4 984.6,226.0 986.5,216.5 988.3,208.5 990.4,211.2 992.2,203.5 995.0,214.6 996.7,204.2 998.8,204.7 1000.7,204.2 1003.2,214.6 1005.1,245.0 1007.2,245.0 1009.5,214.6 1011.4,220.3 1013.5,204.9 1015.6,209.4 1017.7,205.4 1019.8,204.7 1021.9,205.8 1024.0,207.0 1026.0,206.4 1028.4,204.2 1031.3,204.7 1033.4,210.1 1035.0,215.6 1037.6,205.7 1039.7,205.7 1041.8,206.1 1044.9,209.8 1047.0,212.7 1049.3,212.7 1051.2,212.3 1053.3,208.8 1055.0,211.8 1057.5,210.6 1059.6,205.7 1062.8,205.7 1066.4,207.0 1074.3,207.0 1076.4,205.5 1078.5,204.7 1080.6,207.0 1082.5,211.8 1084.4,204.2 1086.9,206.2 1089.1,204.2 1091.0,209.0 1092.9,203.7 1095.3,204.2 1097.4,204.2 1099.5,204.0 1101.6,206.5 1103.7,204.0 1105.8,203.7 1107.9,204.3 1110.0,205.3 1111.8,208.0 1113.7,203.5 1116.3,204.0" fill="none" stroke="#ff9a3c" stroke-width="7" stroke-linejoin="round"/>
<rect x="800" y="160" width="135" height="12" fill="#999" opacity="0.6"/>
<rect x="843" y="600" width="48" height="10" fill="#aaa" opacity="0.6"/>
<rect x="600.4" y="576" width="10" height="11" fill="#999" opacity="0.6"/>
<rect x="698.3" y="576" width="24" height="11" fill="#999" opacity="0.6"/>
<rect x="803.2" y="576" width="24" height="11" fill="#999" opacity="0.6"/>
<rect x="908.1" y="576" width="24" height="11" fill="#999" opacity="0.6"/>
<rect x="1013.0" y="576" width="24" height="11" fill="#999" opacity="0.6"/>
<rect x="1117.9" y="576" width="24" height="11" fill="#999" opacity="0.6"/>
<rect x="542" y="198.0" width="24" height="11" fill="#999" opacity="0.55"/>
<rect x="542" y="274.1" width="24" height="11" fill="#999" opacity="0.55"/>
<rect x="542" y="350.3" width="24" height="11" fill="#999" opacity="0.55"/>
<rect x="542" y="426.5" width="24" height="11" fill="#999" opacity="0.55"/>
<rect x="542" y="502.6" width="24" height="11" fill="#999" opacity="0.55"/>
<rect x="514" y="345" width="11" height="62" fill="#aaa" opacity="0.5"/>
<rect x="643" y="204" width="36" height="10" fill="#aaa" opacity="0.5"/><rect x="643" y="230" width="80" height="10" fill="#aaa" opacity="0.5"/>
</g>
<rect x="1409.3" y="320.9" width="78.9" height="54.8" fill="#fff"/>
<rect x="1419.4" y="325.6" width="65.6" height="42" fill="none" stroke="#999" stroke-width="0.5"/>
<polyline points="1422.6,327.5 1423.4,338.0 1424.2,346.0 1425.0,349.5 1426.0,352.5 1427.0,351.0 1428.0,354.0 1429.0,352.0 1430.0,355.5 1431.0,351.5 1431.8,356.0 1432.6,352.5 1433.4,357.5 1434.2,343.0 1434.8,357.0 1436.0,358.5 1437.0,357.0 1438.0,360.0 1439.0,358.5 1440.0,361.0 1441.2,359.5 1442.4,362.0 1443.6,361.0 1444.8,363.0 1446.0,360.5 1447.0,363.5 1448.2,361.5 1449.4,364.0 1451.0,363.5 1453.0,364.5 1455.0,364.0 1456.6,364.5 1457.2,347.5 1457.8,363.0 1459.0,364.5 1459.8,357.0 1460.4,364.5 1462.0,365.0 1463.6,364.0 1464.6,345.0 1465.1,326.0 1465.6,350.0 1466.2,364.5 1467.6,365.0 1468.6,352.0 1469.2,365.0 1471.0,365.3 1474.0,365.6 1478.0,366.0 1482.4,366.3" fill="none" stroke="#ffa24d" stroke-width="0.9" stroke-linejoin="round"/>
<rect x="1413.6" y="327.0" width="3.6" height="1.3" fill="#aaa" opacity="0.7"/>
<rect x="1413.6" y="331.6" width="3.6" height="1.3" fill="#aaa" opacity="0.7"/>
<rect x="1413.6" y="336.2" width="3.6" height="1.3" fill="#aaa" opacity="0.7"/>
<rect x="1413.6" y="340.8" width="3.6" height="1.3" fill="#aaa" opacity="0.7"/>
<rect x="1413.6" y="345.4" width="3.6" height="1.3" fill="#aaa" opacity="0.7"/>
<rect x="1413.6" y="350.0" width="3.6" height="1.3" fill="#aaa" opacity="0.7"/>
<rect x="1413.6" y="354.6" width="3.6" height="1.3" fill="#aaa" opacity="0.7"/>
<rect x="1413.6" y="359.2" width="3.6" height="1.3" fill="#aaa" opacity="0.7"/>
<rect x="1413.6" y="363.8" width="3.6" height="1.3" fill="#aaa" opacity="0.7"/>
<rect x="1421.5" y="369.6" width="1.2" height="1.4" fill="#aaa" opacity="0.7"/>
<rect x="1432.5" y="369.6" width="3.0" height="1.4" fill="#aaa" opacity="0.7"/>
<rect x="1444.5" y="369.6" width="3.0" height="1.4" fill="#aaa" opacity="0.7"/>
<rect x="1456.5" y="369.6" width="3.0" height="1.4" fill="#aaa" opacity="0.7"/>
<rect x="1468.5" y="369.6" width="3.0" height="1.4" fill="#aaa" opacity="0.7"/>
<rect x="1480.5" y="369.6" width="3.0" height="1.4" fill="#aaa" opacity="0.7"/>
<rect x="1447.5" y="322.8" width="12" height="1.3" fill="#aaa" opacity="0.6"/><rect x="1450" y="372.6" width="5" height="1.3" fill="#bbb" opacity="0.6"/>
<rect x="1426.5" y="327.6" width="4" height="1.1" fill="#bbb" opacity="0.7"/><rect x="1426.5" y="330.4" width="9" height="1.1" fill="#bbb" opacity="0.7"/><rect x="1411.6" y="345" width="1.2" height="4" fill="#bbb" opacity="0.7"/>
<rect x="1409.3" y="379.6" width="78.9" height="70.4" fill="#fff"/>
<g filter="url(#b1)">
<rect x="1430.80" y="381.90" width="6.86" height="6.71" fill="#2f6f8e"/>
<rect x="1437.61" y="381.90" width="6.86" height="6.71" fill="#25858e"/>
<rect x="1444.43" y="381.90" width="6.86" height="6.71" fill="#472d7b"/>
<rect x="1451.24" y="381.90" width="6.86" height="6.71" fill="#3b528b"/>
<rect x="1458.06" y="381.90" width="6.86" height="6.71" fill="#fde725"/>
<rect x="1464.87" y="381.90" width="6.86" height="6.71" fill="#482475"/>
<rect x="1471.69" y="381.90" width="6.86" height="6.71" fill="#31688e"/>
<rect x="1430.80" y="388.56" width="6.86" height="6.71" fill="#3e4989"/>
<rect x="1437.61" y="388.56" width="6.86" height="6.71" fill="#1f9e89"/>
<rect x="1444.43" y="388.56" width="6.86" height="6.71" fill="#3b528b"/>
<rect x="1451.24" y="388.56" width="6.86" height="6.71" fill="#26828e"/>
<rect x="1458.06" y="388.56" width="6.86" height="6.71" fill="#2c728e"/>
<rect x="1464.87" y="388.56" width="6.86" height="6.71" fill="#2a788e"/>
<rect x="1471.69" y="388.56" width="6.86" height="6.71" fill="#21908d"/>
<rect x="1430.80" y="395.21" width="6.86" height="6.71" fill="#3e4989"/>
<rect x="1437.61" y="395.21" width="6.86" height="6.71" fill="#414487"/>
<rect x="1444.43" y="395.21" width="6.86" height="6.71" fill="#35b779"/>
<rect x="1451.24" y="395.21" width="6.86" height="6.71" fill="#440154"/>
<rect x="1458.06" y="395.21" width="6.86" height="6.71" fill="#26828e"/>
<rect x="1464.87" y="395.21" width="6.86" height="6.71" fill="#365c8d"/>
<rect x="1471.69" y="395.21" width="6.86" height="6.71" fill="#33638d"/>
<rect x="1430.80" y="401.87" width="6.86" height="6.71" fill="#1f9e89"/>
<rect x="1437.61" y="401.87" width="6.86" height="6.71" fill="#2a788e"/>
<rect x="1444.43" y="401.87" width="6.86" height="6.71" fill="#414487"/>
<rect x="1451.24" y="401.87" width="6.86" height="6.71" fill="#26828e"/>
<rect x="1458.06" y="401.87" width="6.86" height="6.71" fill="#440154"/>
<rect x="1464.87" y="401.87" width="6.86" height="6.71" fill="#24868e"/>
<rect x="1471.69" y="401.87" width="6.86" height="6.71" fill="#33638d"/>
<rect x="1430.80" y="408.53" width="6.86" height="6.71" fill="#443983"/>
<rect x="1437.61" y="408.53" width="6.86" height="6.71" fill="#2a788e"/>
<rect x="1444.43" y="408.53" width="6.86" height="6.71" fill="#6ece58"/>
<rect x="1451.24" y="408.53" width="6.86" height="6.71" fill="#31688e"/>
<rect x="1458.06" y="408.53" width="6.86" height="6.71" fill="#33638d"/>
<rect x="1464.87" y="408.53" width="6.86" height="6.71" fill="#3e4989"/>
<rect x="1471.69" y="408.53" width="6.86" height="6.71" fill="#31688e"/>
<rect x="1430.80" y="415.19" width="6.86" height="6.71" fill="#1f968b"/>
<rect x="1437.61" y="415.19" width="6.86" height="6.71" fill="#2e6e8e"/>
<rect x="1444.43" y="415.19" width="6.86" height="6.71" fill="#3b528b"/>
<rect x="1451.24" y="415.19" width="6.86" height="6.71" fill="#24868e"/>
<rect x="1458.06" y="415.19" width="6.86" height="6.71" fill="#472d7b"/>
<rect x="1464.87" y="415.19" width="6.86" height="6.71" fill="#5ec962"/>
<rect x="1471.69" y="415.19" width="6.86" height="6.71" fill="#472d7b"/>
<rect x="1430.80" y="421.84" width="6.86" height="6.71" fill="#26828e"/>
<rect x="1437.61" y="421.84" width="6.86" height="6.71" fill="#31688e"/>
<rect x="1444.43" y="421.84" width="6.86" height="6.71" fill="#440154"/>
<rect x="1451.24" y="421.84" width="6.86" height="6.71" fill="#26828e"/>
<rect x="1458.06" y="421.84" width="6.86" height="6.71" fill="#31688e"/>
<rect x="1464.87" y="421.84" width="6.86" height="6.71" fill="#2e6e8e"/>
<rect x="1471.69" y="421.84" width="6.86" height="6.71" fill="#35b779"/>
</g>
<defs><linearGradient id="vir" x1="0" y1="0" x2="0" y2="1"><stop offset="0" stop-color="#fde725"/><stop offset="0.25" stop-color="#5ec962"/><stop offset="0.5" stop-color="#21918c"/><stop offset="0.75" stop-color="#3b528b"/><stop offset="1" stop-color="#440154"/></linearGradient></defs>
<rect x="1481.2" y="381.9" width="3.2" height="46.6" fill="url(#vir)"/>
<rect x="1415.4" y="384.5" width="14.0" height="1.5" fill="#999" opacity="0.75"/>
<rect x="1433.5" y="431" width="1.5" height="14.0" fill="#999" opacity="0.75"/>
<rect x="1485.6" y="382.5" width="1" height="1.2" fill="#aaa" opacity="0.7"/>
<rect x="1418.4" y="391.2" width="11.0" height="1.5" fill="#999" opacity="0.75"/>
<rect x="1440.3" y="431" width="1.5" height="11.0" fill="#999" opacity="0.75"/>
<rect x="1485.6" y="389.7" width="1" height="1.2" fill="#aaa" opacity="0.7"/>
<rect x="1419.4" y="397.8" width="10.0" height="1.5" fill="#999" opacity="0.75"/>
<rect x="1447.1" y="431" width="1.5" height="10.0" fill="#999" opacity="0.75"/>
<rect x="1485.6" y="396.9" width="1" height="1.2" fill="#aaa" opacity="0.7"/>
<rect x="1422.4" y="404.5" width="7.0" height="1.5" fill="#999" opacity="0.75"/>
<rect x="1453.9" y="431" width="1.5" height="7.0" fill="#999" opacity="0.75"/>
<rect x="1485.6" y="404.1" width="1" height="1.2" fill="#aaa" opacity="0.7"/>
<rect x="1418.4" y="411.2" width="11.0" height="1.5" fill="#999" opacity="0.75"/>
<rect x="1460.8" y="431" width="1.5" height="11.0" fill="#999" opacity="0.75"/>
<rect x="1485.6" y="411.3" width="1" height="1.2" fill="#aaa" opacity="0.7"/>
<rect x="1421.4" y="417.8" width="8.0" height="1.5" fill="#999" opacity="0.75"/>
<rect x="1467.6" y="431" width="1.5" height="8.0" fill="#999" opacity="0.75"/>
<rect x="1485.6" y="418.5" width="1" height="1.2" fill="#aaa" opacity="0.7"/>
<rect x="1419.4" y="424.5" width="10.0" height="1.5" fill="#999" opacity="0.75"/>
<rect x="1474.4" y="431" width="1.5" height="10.0" fill="#999" opacity="0.75"/>
<rect x="1485.6" y="425.7" width="1" height="1.2" fill="#aaa" opacity="0.7"/>
<rect x="1411" y="401" width="1.3" height="10" fill="#aaa" opacity="0.7"/><rect x="1446" y="446.6" width="17" height="1.4" fill="#aaa" opacity="0.7"/>
</svg>
<svg style="left:1445.5px;top:276.5px" width="13" height="18" viewBox="0 0 13 18"><path d="M1 1v13l3.2-3 2.300 5.200 2.200-1-2.300-5h4.300z" fill="#fff" stroke="#222" stroke-width="1" stroke-linejoin="round"/></svg>
<!-- g_console -->
<div class="abs" style="left:805.4px;top:635.6px;width:25.3px;height:16.0px;background:#3d4e62;border-radius:2px"></div>
<div class="abs" style="left:833.1px;top:635.6px;width:81.7px;height:16.0px;background:#3d4e62;border-radius:2px"></div>
<div class="abs" style="left:917.2px;top:635.6px;width:27.4px;height:16.0px;background:#41566d;border-radius:2px"></div><div class="abs" style="left:917.2px;top:633.6px;width:27.4px;height:3.2px;background:#2e8ad6;border-radius:2px 2px 0 0"></div>
<div class="abs" style="left:946.8px;top:635.6px;width:25.5px;height:16.0px;background:#3d4e62;border-radius:2px"></div>
<span style="position:absolute;left:809.2px;top:638.8px;font-family:'Liberation Sans',sans-serif;font-size:10.20px;line-height:13.0px;color:#e4e6e8;white-space:pre;letter-spacing:-0.694px;">Help</span>
<span style="position:absolute;left:836.2px;top:638.8px;font-family:'Liberation Sans',sans-serif;font-size:10.20px;line-height:13.0px;color:#e4e6e8;white-space:pre;letter-spacing:-0.087px;">Variable Explorer</span>
<span style="position:absolute;left:920.6px;top:638.8px;font-family:'Liberation Sans',sans-serif;font-size:10.20px;line-height:13.0px;color:#e4e6e8;white-space:pre;letter-spacing:-0.335px;">Plots</span>
<span style="position:absolute;left:949.8px;top:638.8px;font-family:'Liberation Sans',sans-serif;font-size:10.20px;line-height:13.0px;color:#e4e6e8;white-space:pre;letter-spacing:-0.307px;">Files</span>
<div class="abs" style="left:277px;top:654.2px;width:1223px;height:5.400px;background:#445263"></div>
<div class="abs" style="left:884px;top:656.2px;width:8px;height:1.4px;background:#5c6b7a"></div>
<svg style="left:277px;top:660px" width="1223" height="34" viewBox="277 660 1223 34">
<rect x="288.2" y="671" width="12.4" height="9.8" rx="1.2" fill="none" stroke="#fafafa" stroke-width="1.500"/><rect x="288.200" y="671" width="6" height="3.400" fill="#fafafa"/>
<path d="M1393.200 670.800h5l2.600 2.600v6a0.800 0.800 0 0 1-.8.800h-6.800a0.800 0.800 0 0 1-.8-.8v-7.800a0.800 0.800 0 0 1 .8-.8z" fill="#f2f2f2"/><path d="M1395 680.800v1h5.800a0.800 0.800 0 0 0 .8-.8v-6.400" fill="none" stroke="#cfd3d7" stroke-width="1"/>
<rect x="1430.800" y="672.600" width="5.600" height="5.600" fill="#9aa1a8"/>
<path d="M1477.600 673.200h9.200M1477.600 675.600h9.200M1477.600 678h9.200" stroke="#e0e1e3" stroke-width="1.300"/>
</svg>
<div class="abs" style="left:311.600px;top:669px;width:83.600px;height:24.700px;background:#53687c;border-radius:4px 4px 0 0;border-bottom:3.400px solid #2f8fdc"></div>
<span style="position:absolute;left:319.6px;top:674.8px;font-family:'Liberation Sans',sans-serif;font-size:10.20px;line-height:13.0px;color:#d6dbe0;white-space:pre;letter-spacing:-0.179px;">Console 4/A</span>
<svg style="left:378.800px;top:676px" width="9" height="9" viewBox="0 0 9 9"><path d="M0.800 0.800l7.400 7.400M8.200 0.800l-7.400 7.400" stroke="#f0f0f0" stroke-width="1.500"/></svg>
<div class="abs" style="left:278px;top:694.200px;width:1220.500px;height:60.500px;border:1px solid #32414b;border-radius:4px"></div>
<div class="abs" style="left:279px;top:695.200px;width:1203px;height:58.500px;overflow:hidden">
<span style="position:absolute;left:4px;top:-11.3px;font-family:'Liberation Mono',monospace;font-size:10.600px;letter-spacing:-0.105px;line-height:14px;color:#f2f2f2;white-space:pre">         ,       ,</span>
<span style="position:absolute;left:4px;top:3.4px;font-family:'Liberation Mono',monospace;font-size:10.600px;letter-spacing:-0.105px;line-height:14px;color:#f2f2f2;white-space:pre">WARNING:tensorflow:Learning rate reduction is conditioned on metric `val_loss` which is not available. Available metrics are: loss,accuracy,lr</span>
<span style="position:absolute;left:4px;top:17.4px;font-family:'Liberation Mono',monospace;font-size:10.600px;letter-spacing:-0.105px;line-height:14px;color:#f2f2f2;white-space:pre">4/4 [==============================] - 5s 2s/step - loss: 0.0027 - accuracy: 1.0000 - lr: 1.0000e-04</span>
<span style="position:absolute;left:4px;top:30.9px;font-family:'Liberation Mono',monospace;font-size:10.600px;letter-spacing:-0.105px;line-height:14px;color:#f2f2f2;white-space:pre">Epoch 493/500</span>
<span style="position:absolute;left:4px;top:44.6px;font-family:'Liberation Mono',monospace;font-size:10.600px;letter-spacing:-0.105px;line-height:14px;color:#f2f2f2;white-space:pre">4/4 [==============================] - ETA: 0s - loss: 0.0032 - accuracy: 1.0000WARNING:tensorflow:Early stopping conditioned on metric `val_loss` which is not available. Available metrics</span>
</div>
<svg style="left:1482px;top:695px" width="16" height="60" viewBox="1482 695 16 60">
<path d="M1486.200 704.600l3.600-3.600l3.600 3.600z" fill="#4d5f70"/><path d="M1486.200 742l3.600 3.600l3.600-3.600z" fill="#4d5f70"/>
<rect x="1485.400" y="706.800" width="8.800" height="31.400" rx="4" fill="#19232d" stroke="#32414b" stroke-width="1"/>
<rect x="1485.400" y="728" width="8.800" height="10.200" rx="4" fill="#5a7489"/>
</svg>
<svg style="left:277px;top:755px" width="1223" height="24" viewBox="277 755 1223 24">
<path d="M283.600 763l7.400 7.400M291 763l-7.400 7.400" stroke="#f0f0f0" stroke-width="1.500"/>
<rect x="305" y="758.500" width="969" height="17.600" rx="2.500" fill="#19232d" stroke="#32414b" stroke-width="1"/>
<path d="M1264.500 759v16.600" stroke="#32414b" stroke-width="1"/><path d="M1267.200 766.200l2.200 2.200l2.200-2.200" fill="none" stroke="#5f6b78" stroke-width="1"/>
<g transform="translate(1228.8 -18.6)">
<circle cx="126.600" cy="785.400" r="3.600" fill="none" stroke="#f0f0f0" stroke-width="1.600"/><path d="M129.200 788l3.600 3.600" stroke="#f0f0f0" stroke-width="1.800"/><path d="M121.500 783.500l2.500-2.500" stroke="#f0f0f0" stroke-width="1.500"/>
</g><g transform="translate(1228.2 -18.6)">
<path d="M152.400 790.500v-8.800M148.800 785.200l3.600-3.600l3.600 3.600" fill="none" stroke="#f0f0f0" stroke-width="1.500"/><circle cx="156.800" cy="789.300" r="1.700" fill="none" stroke="#c8ccd0" stroke-width="0.900"/><path d="M158 790.500l1.600 1.600" stroke="#c8ccd0" stroke-width="0.900"/>
</g><g transform="translate(1228.2 -18.6)">
<path d="M179 781.200v8.800M175.400 786.500l3.600 3.600l3.600-3.600" fill="none" stroke="#f0f0f0" stroke-width="1.500"/><circle cx="183.800" cy="789.300" r="1.700" fill="none" stroke="#c8ccd0" stroke-width="0.900"/><path d="M185 790.500l1.600 1.600" stroke="#c8ccd0" stroke-width="0.900"/>
</g><g transform="translate(1230.3 -18.6)">
<circle cx="203.600" cy="790.600" r="1.300" fill="#f0f0f0"/><circle cx="209" cy="785.200" r="2.600" fill="#f0f0f0"/><path d="M209 781.400v7.600M205.700 783.300l6.600 3.800M205.700 787.100l6.600-3.800" stroke="#f0f0f0" stroke-width="1.100"/>
</g><g transform="translate(1228.2 -18.6)">
<path d="M257 781.800h-2.400v8.400h2.400M263.800 781.800h2.400v8.400h-2.400" fill="none" stroke="#c98a4b" stroke-width="1.500"/><rect x="257" y="784.600" width="6.800" height="2.800" fill="#2f7fe6"/>
</g></svg>
<span style="position:absolute;left:1284.3px;top:761.0px;font-family:'Liberation Sans',sans-serif;font-size:10.20px;line-height:13.0px;color:#dfe1e2;white-space:pre;letter-spacing:-0.023px;">no matches</span>
<span style="position:absolute;left:1455.8px;top:761.0px;font-family:'Liberation Sans',sans-serif;font-size:10.20px;line-height:13.0px;color:#f0f0f0;white-space:pre;letter-spacing:-0.238px;">Aa</span>
<div class="abs" style="left:831.4px;top:779.0px;width:76.6px;height:16.7px;background:#41566d;border-radius:2px"></div><div class="abs" style="left:831.4px;top:777.0px;width:76.6px;height:3.2px;background:#2e8ad6;border-radius:2px 2px 0 0"></div>
<div class="abs" style="left:910.2px;top:779.0px;width:36.0px;height:16.7px;background:#3d4e62;border-radius:2px"></div>
<span style="position:absolute;left:835.0px;top:781.3px;font-family:'Liberation Sans',sans-serif;font-size:10.20px;line-height:13.0px;color:#e4e6e8;white-space:pre;letter-spacing:-0.290px;">IPython Console</span>
<span style="position:absolute;left:913.6px;top:781.3px;font-family:'Liberation Sans',sans-serif;font-size:10.20px;line-height:13.0px;color:#e4e6e8;white-space:pre;letter-spacing:-0.177px;">History</span>
<div class="abs" style="left:0;top:797.300px;width:1500px;height:19.500px;background:#455364"></div>
<div class="abs" style="left:0;top:816.800px;width:1500px;height:6px;background:#1d1e20"></div>
<svg style="left:1020px;top:797px" width="140" height="20" viewBox="1020 797 140 20">
<circle cx="1030.300" cy="804.400" r="1" fill="#dfe1e2"/><circle cx="1033.500" cy="804.400" r="1" fill="#dfe1e2"/><path d="M1029.400 807.600l2.700 2.800l4.600-5.400" fill="none" stroke="#dfe1e2" stroke-width="1.200"/>
<circle cx="1142.500" cy="807" r="3.600" fill="none" stroke="#dfe1e2" stroke-width="1.100"/><path d="M1139.500 805.600l3 1.700l3-1.700M1142.500 807.300v3.200" fill="none" stroke="#dfe1e2" stroke-width="0.900"/>
</svg>
<span style="position:absolute;left:1044.5px;top:801.0px;font-family:'Liberation Sans',sans-serif;font-size:10.20px;line-height:13.0px;color:#dfe1e2;white-space:pre;letter-spacing:-0.169px;">LSP Python: ready</span>
<span style="position:absolute;left:1153.7px;top:801.0px;font-family:'Liberation Sans',sans-serif;font-size:10.20px;line-height:13.0px;color:#dfe1e2;white-space:pre;letter-spacing:-0.041px;">conda (Python 3.9.13)</span>
<span style="position:absolute;left:1264.5px;top:801.0px;font-family:'Liberation Sans',sans-serif;font-size:10.20px;line-height:13.0px;color:#dfe1e2;white-space:pre;letter-spacing:-0.074px;">Line 245, Col 5</span>
<span style="position:absolute;left:1343.8px;top:801.0px;font-family:'Liberation Sans',sans-serif;font-size:10.20px;line-height:13.0px;color:#dfe1e2;white-space:pre;letter-spacing:-0.279px;">UTF-8</span>
<span style="position:absolute;left:1383.5px;top:801.0px;font-family:'Liberation Sans',sans-serif;font-size:10.20px;line-height:13.0px;color:#dfe1e2;white-space:pre;letter-spacing:-0.909px;">CRLF</span>
<span style="position:absolute;left:1418.7px;top:801.0px;font-family:'Liberation Sans',sans-serif;font-size:10.20px;line-height:13.0px;color:#dfe1e2;white-space:pre;letter-spacing:-0.905px;">RW</span>
<div class="abs" style="left:1432.700px;top:780.700px;width:62px;height:30.600px;background:#222324"></div>
<div class="abs" style="left:1432.700px;top:780.700px;width:30.600px;height:30.600px;background:#2b2c2d"></div>
<div class="abs" style="left:1464.500px;top:780.700px;width:30.300px;height:30.600px;background:#2b2c2d"></div>
<svg style="left:1432px;top:780px" width="64" height="32" viewBox="1432 780 64 32">
<rect x="1440.700" y="790" width="5.300" height="14" fill="#c9c9c9"/><rect x="1449.300" y="790" width="5.300" height="14" fill="#c9c9c9"/>
<rect x="1471.200" y="789.800" width="17.600" height="13.800" fill="none" stroke="#c9c9c9" stroke-width="1.300"/>
<path d="M1473 803.600c.4-2.600 2-3.600 4.600-4.200c.8-.2.800-.8.400-1.400c-.6-.9-.9-1.700-.9-2.800a2.900 2.900 0 0 1 5.800 0c0 1.100-.3 1.900-.9 2.800c-.4.600-.4 1.200.4 1.400c2.600.6 4.200 1.600 4.600 4.200z" fill="#c9c9c9"/>
</svg>
</body></html>
